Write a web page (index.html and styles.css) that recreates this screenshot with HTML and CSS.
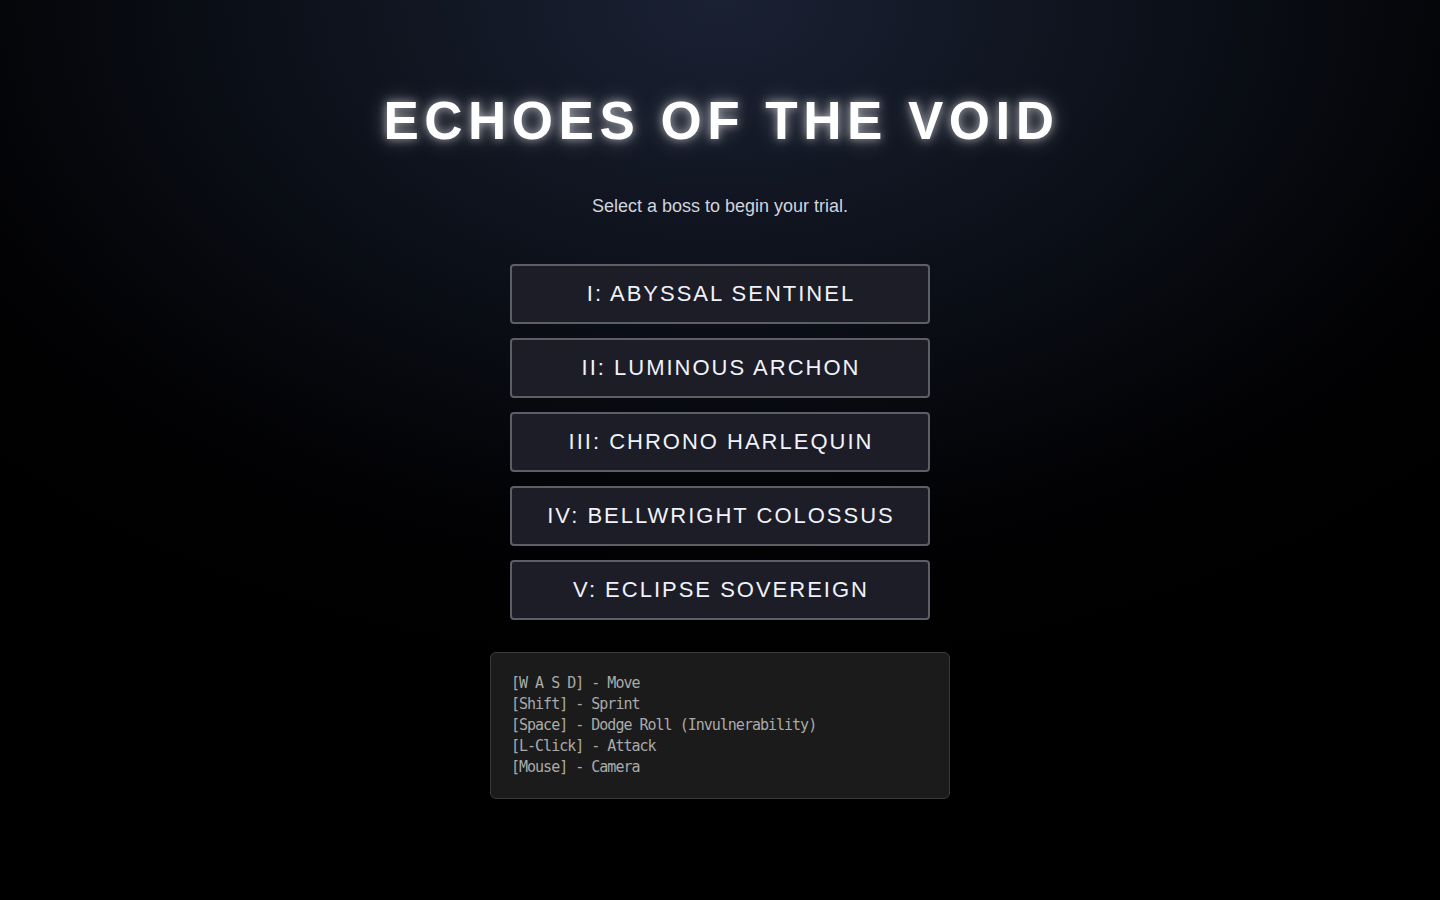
FILE: index.html
```html
<!DOCTYPE html>
<html lang="en">
<head>
<meta charset="utf-8">
<title>Echoes of the Void</title>
<link rel="stylesheet" href="styles.css">
</head>
<body>
<main class="menu">
  <h1 class="title">ECHOES OF THE VOID</h1>
  <p class="subtitle">Select a boss to begin your trial.</p>
  <div class="boss-list">
    <button class="boss-btn">I: Abyssal Sentinel</button>
    <button class="boss-btn">II: Luminous Archon</button>
    <button class="boss-btn">III: Chrono Harlequin</button>
    <button class="boss-btn">IV: Bellwright Colossus</button>
    <button class="boss-btn">V: Eclipse Sovereign</button>
  </div>
  <div class="controls">
    <div>[W A S D] - Move</div>
    <div>[Shift] - Sprint</div>
    <div>[Space] - Dodge Roll (Invulnerability)</div>
    <div>[L-Click] - Attack</div>
    <div>[Mouse] - Camera</div>
  </div>
</main>
</body>
</html>
```

FILE: styles.css
```css
html, body {
  margin: 0;
  padding: 0;
  height: 100%;
}
body {
  background: radial-gradient(ellipse 70% 75% at 50% 0%, #1a2133 0%, #0c1019 45%, #020204 80%, #000 100%);
  background-color: #000;
  color: #fff;
  font-family: "Liberation Sans", Arial, sans-serif;
  overflow: hidden;
}
.menu {
  display: flex;
  flex-direction: column;
  align-items: center;
  padding-top: 90px;
}
.title {
  margin: 0;
  font-size: 53px;
  line-height: 61px;
  font-weight: 700;
  letter-spacing: 5.5px;
  padding-left: 3px;
  color: #fff;
  text-shadow: 0 0 10px rgba(255, 255, 255, 0.6), 0 0 22px rgba(255, 255, 255, 0.35);
}
.subtitle {
  margin: 45px 0 0;
  font-size: 18px;
  line-height: 21px;
  color: #d0d4dc;
}
.boss-list {
  display: flex;
  flex-direction: column;
  gap: 14px;
  margin-top: 47px;
}
.boss-btn {
  width: 420px;
  height: 60px;
  box-sizing: border-box;
  background: #1d1d27;
  border: 2px solid #5e5e66;
  border-radius: 4px;
  color: #f0f2fa;
  font-family: "Liberation Sans", Arial, sans-serif;
  font-size: 22px;
  letter-spacing: 2px;
  text-transform: uppercase;
  padding: 0 0 0 2px;
  cursor: pointer;
}
.controls {
  margin-top: 32px;
  width: 460px;
  box-sizing: border-box;
  padding: 20px 20px 20px;
  background: #1b1b1b;
  border: 1px solid #3a3a3a;
  border-radius: 6px;
  font-family: "DejaVu Sans Mono", monospace;
  font-size: 15px;
  letter-spacing: -1px;
  line-height: 21px;
  color: #aaaaaa;
}
```
